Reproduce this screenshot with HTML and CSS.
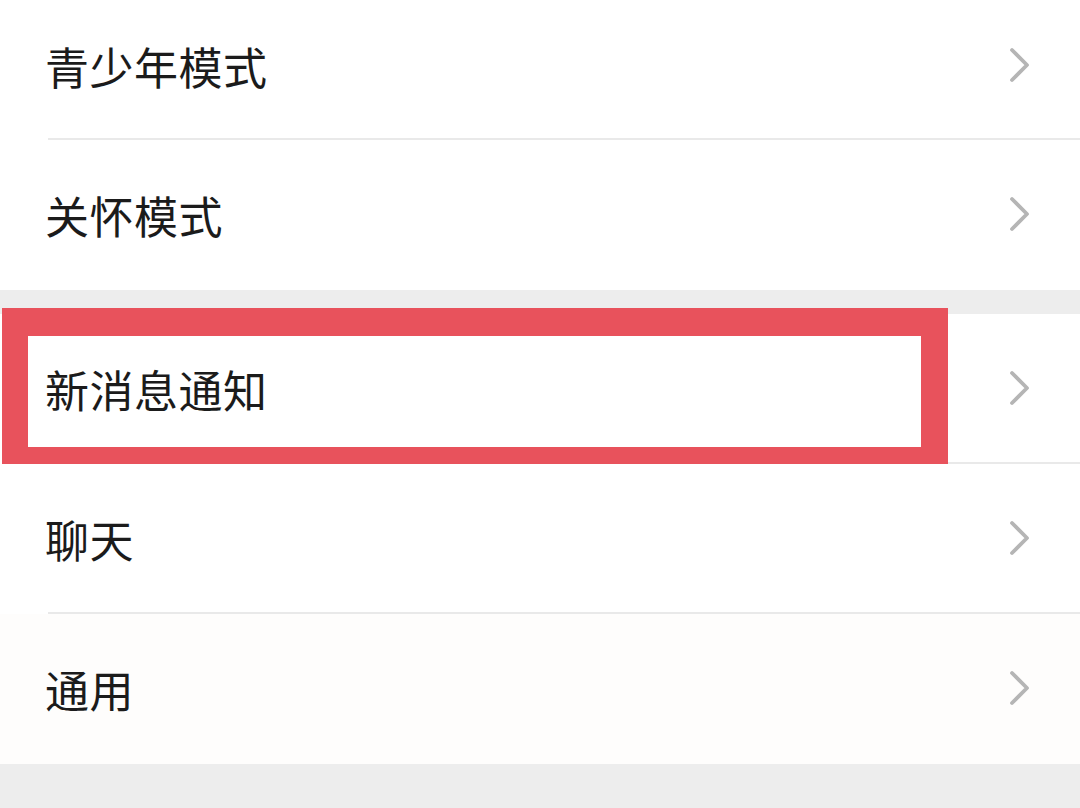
FILE: index.html
```html
<!DOCTYPE html>
<html>
  <head>
    <meta http-equiv="Content-Type" content="text/html; charset=utf-8">
    <link rel="stylesheet" href="styles.css">
  </head>
  <body>
    <div class="group top">
      <div class="row first line"><span class="label">青少年模式</span><svg class="chev" viewBox="0 0 24 36"><path d="M4 3 L19 18 L4 33"/></svg></div>
      <div class="row"><span class="label">关怀模式</span><svg class="chev" viewBox="0 0 24 36"><path d="M4 3 L19 18 L4 33"/></svg></div>
    </div>
    <div class="group">
      <div class="row line marked"><span class="label">新消息通知</span><svg class="chev" viewBox="0 0 24 36"><path d="M4 3 L19 18 L4 33"/></svg><div class="mark"></div></div>
      <div class="row line"><span class="label">聊天</span><svg class="chev" viewBox="0 0 24 36"><path d="M4 3 L19 18 L4 33"/></svg></div>
      <div class="row warm"><span class="label">通用</span><svg class="chev" viewBox="0 0 24 36"><path d="M4 3 L19 18 L4 33"/></svg></div>
    </div>
  </body>
</html>
```

FILE: styles.css
```css
html, body { margin: 0; height: 100%; overflow: hidden; }
body { background: #ededed; font-family: "Noto Sans CJK SC", "Noto Sans", sans-serif; width: 1080px; }
.group { background: #fff; margin-bottom: 24px; }
.row { position: relative; height: 150px; display: flex; align-items: center; justify-content: space-between; padding: 0 48px 0 45px; box-sizing: border-box; }
.row.first { height: 140px; padding-bottom: 9px; }
.line { background: linear-gradient(#e9e9e9, #e9e9e9) 48px 100% / calc(100% - 48px) 2px no-repeat, #fff; }
.warm { background: #fefdfc; }
.label { font-size: 44px; color: #1b1b1b; letter-spacing: 0.5px; }
.chev { width: 24px; height: 36px; fill: none; stroke: #b5b5b5; stroke-width: 3.8; stroke-linecap: round; stroke-linejoin: round; margin-top: -2px; }
.mark { position: absolute; top: -6px; left: 2px; width: 946px; height: 165px; box-sizing: border-box; border: solid #e8525c; border-width: 28px 27px 26px 26px; }
```
